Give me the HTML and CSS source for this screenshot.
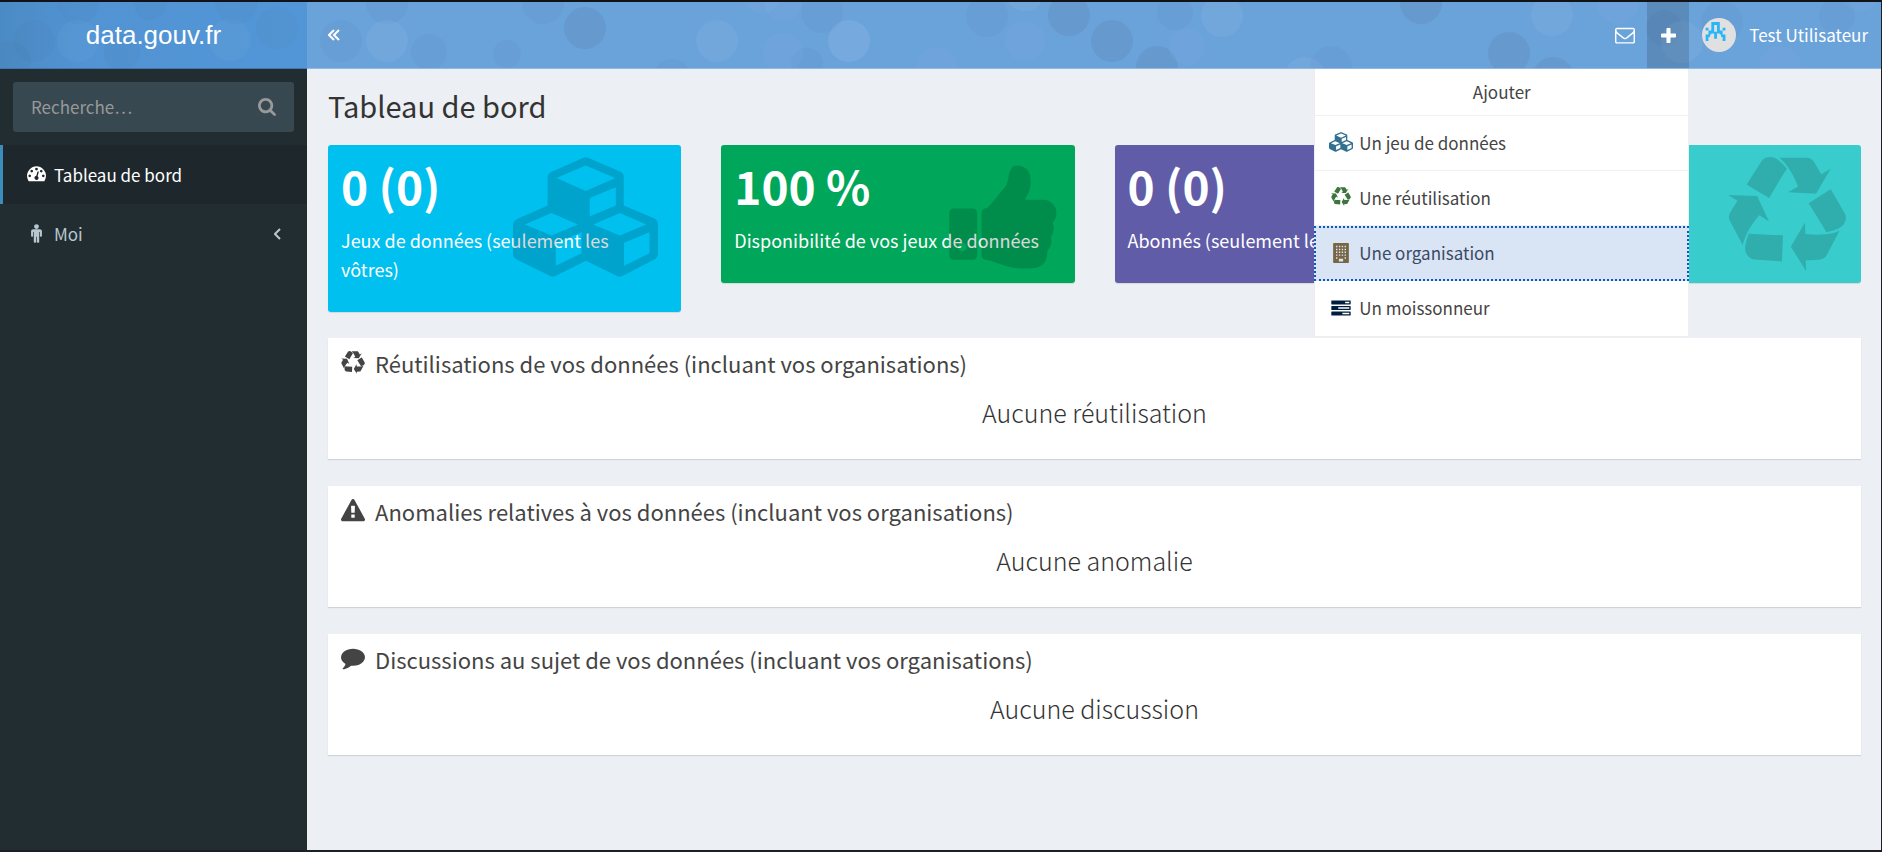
FILE: index.html
```html
<!DOCTYPE html>
<html lang="fr">
<head>
<meta charset="utf-8">
<title>Tableau de bord - data.gouv.fr</title>
<link rel="stylesheet" href="styles.css">
</head>
<body>
<svg class="sprite" aria-hidden="true">
  <symbol id="i-envelope" viewBox="0 0 1792 1792"><path d="M1664 1504v-768q-32 36-69 66-268 206-426 338-51 43-83 67t-86.500 48.500-102.500 24.500h-2q-48 0-102.500-24.500t-86.500-48.500-83-67q-158-132-426-338-37-30-69-66v768q0 13 9.500 22.500t22.500 9.500h1472q13 0 22.500-9.500t9.500-22.500zm0-1051v-24.500l-.5-13-3-12.500-5.500-9-9-7.500-14-2.500h-1472q-13 0-22.500 9.500t-9.500 22.500q0 168 147 284 193 152 401 317 6 5 35 29.500t46 37.500 44.500 31.500 50.500 27.500 43 9h2q20 0 43-9t50.500-27.500 44.500-31.500 46-37.500 35-29.500q208-165 401-317 54-43 100.500-115.500t46.500-131.500zm128-37v1088q0 66-47 113t-113 47h-1472q-66 0-113-47t-47-113v-1088q0-66 47-113t113-47h1472q66 0 113 47t47 113z"/></symbol>
  <symbol id="i-plus" viewBox="192 128 1408 1408"><path d="M1600 736v192q0 40-28 68t-68 28h-416v416q0 40-28 68t-68 28h-192q-40 0-68-28t-28-68v-416h-416q-40 0-68-28t-28-68v-192q0-40 28-68t68-28h416v-416q0-40 28-68t68-28h192q40 0 68 28t28 68v416h416q40 0 68 28t28 68z"/></symbol>
  <symbol id="i-search" viewBox="64 128 1664 1664"><path d="M1216 832q0-185-131.500-316.500t-316.500-131.500-316.500 131.500-131.500 316.500 131.500 316.500 316.500 131.500 316.500-131.500 131.500-316.500zm512 832q0 52-38 90t-90 38q-54 0-90-38l-343-342q-179 124-399 124-143 0-273.500-55.500t-225-150-150-225-55.500-273.500 55.500-273.500 150-225 225-150 273.500-55.500 273.500 55.500 225 150 150 225 55.500 273.500q0 220-124 399l343 343q37 37 37 90z"/></symbol>
  <symbol id="i-dashboard" viewBox="0 128 1792 1792"><path d="M384 1152q0-53-37.500-90.500t-90.500-37.500-90.500 37.500-37.500 90.500 37.500 90.500 90.500 37.500 90.500-37.500 37.500-90.500zm192-448q0-53-37.500-90.500t-90.500-37.500-90.500 37.500-37.500 90.500 37.500 90.500 90.500 37.500 90.500-37.500 37.500-90.500zm428 481l101-382q6-26-7.500-48.500t-38.500-29.500-48 6.500-30 39.500l-101 382q-60 5-107 43.500t-63 98.500q-20 77 20 146t117 89 146-20 89-117q16-60-6-117t-72-91zm660-33q0-53-37.500-90.500t-90.500-37.500-90.500 37.500-37.500 90.500 37.500 90.500 90.500 37.500 90.500-37.500 37.500-90.500zm-640-640q0-53-37.500-90.500t-90.500-37.500-90.500 37.500-37.500 90.500 37.500 90.500 90.500 37.500 90.500-37.500 37.500-90.500zm448 192q0-53-37.500-90.500t-90.500-37.500-90.500 37.500-37.500 90.500 37.500 90.500 90.500 37.500 90.500-37.500 37.500-90.500zm320 448q0 261-141 483-19 29-54 29h-1402q-35 0-54-29-141-221-141-483 0-182 71-348t191-286 286-191 348-71 348 71 286 191 191 286 71 348z"/></symbol>
  <symbol id="i-male" viewBox="0 144 1792 1792"><path d="M1408 832v416q0 40-28 68t-68 28-68-28-28-68v-352h-64v912q0 46-33 79t-79 33-79-33-33-79v-464h-64v464q0 46-33 79t-79 33-79-33-33-79v-912h-64v352q0 40-28 68t-68 28-68-28-28-68v-416q0-80 56-136t136-56h640q80 0 136 56t56 136zm-288-448q0 93-65.500 158.500t-158.500 65.500-158.500-65.500-65.500-158.500 65.500-158.500 158.500-65.500 158.500 65.500 65.500 158.500z"/></symbol>
  <symbol id="i-cubes" viewBox="576 228 440 364"><path fill-rule="evenodd" d="M790 230q7-3 14 0l99 43q9 5 9 16v86l92 39q12 6 12 18v88q0 13-11 19l-97 50q-8 4-16 0l-95-46-92 46q-8 4-16 0l-102-50q-11-6-11-19v-84q0-13 11-19l94-42v-84q0-12 9-17zM797 254l89 38-89 39-89-39zM809 352l79-32v55l-79 33zM693 398l80 35-80 33-81-33zM706 488l78-32v64l-78 38zM900 398l80 35-80 33-80-33zM913 488l77-32v64l-77 38z"/></symbol>
  <symbol id="i-recycle" viewBox="0 0 1792 1792"><path d="M836 1169l-15 368-2 22-420-29q-36-3-67-31.500t-47-65.500q-11-27-14.500-55t4-65 12-55 21.500-64 19-53q78 12 509 28zm-387-586l180 379-147-92q-63 72-111.500 144.500t-72.500 125-39.500 94.500-18.500 63l-4 21-190-357q-17-26-18-56t6-47l8-18q35-63 114-188l-140-86zm1231 517l-188 359q-12 29-36.500 46.500t-43.500 20.500l-18 4q-71 7-219 12l8 164-230-367 211-362 7 173q170 16 283 5t170-33zm-785-924q-47 63-265 435l-317-187-19-12 225-356q20-31 60-45t80-10q24 2 48.500 12t42 21 41.500 33 36 34.500 36 39.500 32 35zm655 307l212 363q18 37 12.500 76t-27.500 74q-13 20-33 37t-38 28-48.500 22-47 16-51.500 14-46 12q-34-72-265-436l313-195zm-143-226l142-83-220 373-419-20 151-86q-34-89-75-166t-75.500-123.500-64.500-80-47-46.500l-17-13 405 1q31-3 58 10.500t39 28.500l11 15q39 61 112 190z"/></symbol>
  <symbol id="i-thumb" viewBox="0 0 1792 1792"><path d="M320 1344q0-26-19-45t-45-19q-27 0-45.500 19t-18.500 45q0 27 18.500 45.500t45.500 18.500q26 0 45-18.500t19-45.500zm160-512v640q0 26-19 45t-45 19h-288q-26 0-45-19t-19-45v-640q0-26 19-45t45-19h288q26 0 45 19t19 45zm1184 0q0 86-55 149 15 44 15 76 3 76-43 137 17 56 0 117-15 57-54 94 9 112-49 181-64 76-197 78h-129q-66 0-144-15.500t-121.500-29-120.500-39.500q-123-43-158-44-26-1-45-19.500t-19-44.500v-641q0-25 18-43.500t43-20.500q24-2 76-59t101-121q68-87 101-120 18-18 31-48t17.500-48.500 13.500-60.500q7-39 12.500-61t19.500-52 34-50q19-19 45-19 46 0 82.500 10.500t60 26 40 40.500 24 45 12 50 5 45 .5 39q0 38-9.500 76t-19 60-27.500 56q-3 6-10 18t-11 22-8 24h277q78 0 135 57t57 135z"/></symbol>
  <symbol id="i-warning" viewBox="0 0 1792 1792"><path d="M1024 1375v-190q0-14-9.500-23.500t-22.500-9.500h-192q-13 0-22.500 9.500t-9.500 23.500v190q0 14 9.500 23.500t22.500 9.500h192q13 0 22.500-9.500t9.500-23.500zm-2-374l18-459q0-12-10-19-13-11-24-11h-220q-11 0-24 11-10 7-10 21l17 457q0 10 10 16.500t24 6.500h185q14 0 23.500-6.500t10.500-16.500zm-14-934l768 1408q35 63-2 126-17 29-46.500 46t-63.500 17h-1536q-34 0-63.500-17t-46.500-46q-37-63-2-126l768-1408q17-31 47-49t65-18 65 18 47 49z"/></symbol>
  <symbol id="i-comment" viewBox="0 128 1792 1792"><path d="M1792 896q0 174-120 321.500t-326 233-450 85.500q-70 0-145-8-198 175-460 242-49 14-114 22-17 2-30.500-9t-17.500-29v-1q-3-4-.5-12t2-10 4.500-9.500l6-9 7-8.500 8-9q7-8 31-34.500t34.500-38 31-39.500 32.500-51 27-59 26-76q-157-89-247.500-220t-90.500-281q0-130 71-248.500t191-204.500 286-136.500 348-50.500 348 50.500 286 136.500 191 204.500 71 248.500z"/></symbol>
  <symbol id="i-tasks" viewBox="0 0 1792 1664"><path d="M1024 1408h640v-128h-640v128zm-384-512h1024v-128h-1024v128zm640-512h384v-128h-384v128zm512 832v256q0 26-19 45t-45 19h-1664q-26 0-45-19t-19-45v-256q0-26 19-45t45-19h1664q26 0 45 19t19 45zm0-512v256q0 26-19 45t-45 19h-1664q-26 0-45-19t-19-45v-256q0-26 19-45t45-19h1664q26 0 45 19t19 45zm0-512v256q0 26-19 45t-45 19h-1664q-26 0-45-19t-19-45v-256q0-26 19-45t45-19h1664q26 0 45 19t19 45z"/></symbol>
  <symbol id="i-building" viewBox="0 0 22 28"><path fill-rule="evenodd" d="M1 0h20q1 0 1 1v26q0 1-1 1H1q-1 0-1-1V1q0-1 1-1zM4 4v2h2V4zM8 4v2h2V4zM12 4v2h2V4zM16 4v2h2V4zM4 8v2h2V8zM8 8v2h2V8zM12 8v2h2V8zM16 8v2h2V8zM4 12v2h2v-2zM8 12v2h2v-2zM12 12v2h2v-2zM16 12v2h2v-2zM4 16v2h2v-2zM8 16v2h2v-2zM12 16v2h2v-2zM16 16v2h2v-2zM4 20v2h2v-2zM16 20v2h2v-2zM8 22v4h6v-4z"/></symbol>
</svg>

<div class="page">
  <header class="header">
    <a class="logo" href="#">
      <svg class="bubbles" aria-hidden="true">
        <g class="dark"><circle cx="277" cy="26" r="21"/><circle cx="78" cy="1" r="21"/><circle cx="236" cy="1" r="21"/><circle cx="34" cy="39" r="21"/><circle cx="10" cy="60" r="21"/><circle cx="122" cy="50" r="18"/><circle cx="150" cy="2" r="16"/></g>
        <g class="light"><circle cx="78" cy="39" r="21"/><circle cx="230" cy="38" r="21"/></g>
      </svg>
      <span class="logo-text">data.gouv.fr</span>
    </a>
    <nav class="navbar">
      <svg class="bubbles" aria-hidden="true">
        <g class="dark"><circle class="strong" cx="278" cy="26" r="21"/><circle cx="80" cy="1" r="21"/><circle cx="236" cy="1" r="21"/><circle cx="34" cy="39" r="21"/><circle cx="122" cy="50" r="18"/><circle cx="200" cy="52" r="14"/><circle cx="365" cy="77" r="20"/><circle cx="515" cy="10" r="21"/><circle cx="500" cy="62" r="16"/><circle class="strong" cx="762" cy="13" r="21"/><circle class="strong" cx="805" cy="39" r="21"/><circle class="strong" cx="850" cy="65" r="21"/><circle cx="868" cy="10" r="18"/><circle cx="680" cy="14" r="21"/><circle cx="1024" cy="65" r="21"/><circle class="strong" cx="1114" cy="1" r="21"/><circle class="strong" cx="1202" cy="51" r="21"/><circle class="strong" cx="1246" cy="76" r="21"/><circle cx="1357" cy="26" r="18"/><circle cx="1415" cy="20" r="21"/><circle cx="1530" cy="14" r="18"/></g>
        <g class="light"><circle class="strong" cx="80" cy="39" r="21"/><circle class="strong" cx="410" cy="39" r="21"/><circle class="strong" cx="542" cy="39" r="21"/><circle cx="542" cy="39" r="21"/><circle cx="476" cy="1" r="18"/><circle cx="476" cy="51" r="20"/><circle cx="455" cy="-7" r="18"/><circle cx="630" cy="65" r="20"/><circle class="strong" cx="718" cy="-11" r="20"/><circle cx="718" cy="39" r="20"/><circle class="strong" cx="915" cy="14" r="21"/><circle cx="880" cy="45" r="18"/><circle class="strong" cx="998" cy="76" r="21"/><circle class="strong" cx="1245" cy="13" r="21"/><circle cx="1311" cy="1" r="21"/><circle class="strong" cx="1375" cy="40" r="21"/><circle cx="1473" cy="65" r="21"/><circle cx="1553" cy="-12" r="21"/></g>
      </svg>
      <button class="toggle" type="button" aria-label="Réduire le menu">
        <svg width="12" height="12" viewBox="0 0 12 12" aria-hidden="true"><path d="M6 1L1 6l5 5M11 1L6 6l5 5"/></svg>
      </button>
      <div class="nav-right">
        <button class="nav-button" type="button" aria-label="Messages"><svg class="icon nav-icon" aria-hidden="true"><use href="#i-envelope"/></svg></button>
        <div class="add">
          <button class="nav-button nav-button-open" type="button" aria-label="Ajouter" aria-expanded="true"><svg class="icon plus-icon" aria-hidden="true"><use href="#i-plus"/></svg></button>
          <div class="dropdown">
            <div class="dropdown-title">Ajouter</div>
            <a class="dropdown-item" href="#"><svg class="icon menu-icon cubes-small" aria-hidden="true"><use href="#i-cubes"/></svg>Un jeu de données</a>
            <a class="dropdown-item" href="#"><svg class="icon menu-icon recycle-small" aria-hidden="true"><use href="#i-recycle"/></svg>Une réutilisation</a>
            <a class="dropdown-item dropdown-item-focus" href="#"><svg class="icon menu-icon building-small" aria-hidden="true"><use href="#i-building"/></svg>Une organisation</a>
            <a class="dropdown-item" href="#"><svg class="icon menu-icon tasks-small" aria-hidden="true"><use href="#i-tasks"/></svg>Un moissonneur</a>
          </div>
        </div>
        <a class="user" href="#">
          <svg class="avatar" viewBox="0 0 84 84" aria-hidden="true"><circle cx="42" cy="42" r="42" fill="#e0e0e0"/><path fill="#29b6f6" d="M23 10h21v7H23zM23 17h7v21h-7zM37 17h7v21h-7zM9 24h7v7H9zM51 24h7v7h-7zM16 31h7v10h-7zM44 31h7v10h-7zM30 34h7v17h-7zM9 41h7v16H9zM51 41h7v16h-7zM16 41h4v6h-4zM47 41h4v6h-4z"/></svg>
          <span>Test Utilisateur</span>
        </a>
      </div>
    </nav>
  </header>

  <div class="body">
    <aside class="sidebar">
      <form class="search">
        <input class="search-input" type="text" placeholder="Recherche…" aria-label="Recherche">
        <button class="search-button" type="button" aria-label="Rechercher"><svg class="icon search-icon" aria-hidden="true"><use href="#i-search"/></svg></button>
      </form>
      <nav class="menu">
        <a class="menu-item menu-item-active" href="#"><svg class="icon side-icon" aria-hidden="true"><use href="#i-dashboard"/></svg><span>Tableau de bord</span></a>
        <a class="menu-item" href="#"><svg class="icon side-icon" aria-hidden="true"><use href="#i-male"/></svg><span>Moi</span><svg class="chevron" width="7" height="12" viewBox="0 0 7 12" aria-hidden="true"><path d="M6 1L1 6l5 5"/></svg></a>
      </nav>
    </aside>

    <main class="content">
      <h1 class="title">Tableau de bord</h1>
      <div class="cards">
        <a class="card card-aqua" href="#"><strong class="card-value">0 (0)</strong><span class="card-label">Jeux de données (seulement les vôtres)</span><svg class="icon card-icon card-icon-cubes" aria-hidden="true"><use href="#i-cubes"/></svg></a>
        <a class="card card-green" href="#"><strong class="card-value">100 %</strong><span class="card-label">Disponibilité de vos jeux de données</span><svg class="icon card-icon card-icon-thumb" aria-hidden="true"><use href="#i-thumb"/></svg></a>
        <a class="card card-purple" href="#"><strong class="card-value">0 (0)</strong><span class="card-label">Abonnés (seulement les</span></a>
        <a class="card card-teal" href="#" aria-label="Réutilisations"><svg class="icon card-icon card-icon-recycle" aria-hidden="true"><use href="#i-recycle"/></svg></a>
      </div>

      <section class="box">
        <h2 class="box-title"><svg class="icon box-icon" aria-hidden="true"><use href="#i-recycle"/></svg>Réutilisations de vos données (incluant vos organisations)</h2>
        <p class="box-empty">Aucune réutilisation</p>
      </section>
      <section class="box">
        <h2 class="box-title"><svg class="icon box-icon" aria-hidden="true"><use href="#i-warning"/></svg>Anomalies relatives à vos données (incluant vos organisations)</h2>
        <p class="box-empty">Aucune anomalie</p>
      </section>
      <section class="box">
        <h2 class="box-title"><svg class="icon box-icon" aria-hidden="true"><use href="#i-comment"/></svg>Discussions au sujet de vos données (incluant vos organisations)</h2>
        <p class="box-empty">Aucune discussion</p>
      </section>
    </main>
  </div>
</div>
</body>
</html>
```
FILE: styles.css
```css
* { box-sizing: border-box; }

body {
  margin: 0;
  font-family: "Noto Sans CJK SC", "Noto Sans", sans-serif;
  font-size: 17px;
  line-height: 29px;
  color: #333;
}

a { color: inherit; text-decoration: none; }

button {
  border: 0;
  padding: 0;
  background: none;
  color: inherit;
  font: inherit;
  cursor: pointer;
}

.sprite { position: absolute; width: 0; height: 0; }
.icon { display: block; flex: none; fill: currentColor; }

.page {
  display: flex;
  flex-direction: column;
  min-height: 100vh;
  border: solid #1d1f24;
  border-width: 2px 1px 2px 0;
  border-top-color: #111318;
}

/* Header */
.header {
  display: grid;
  grid-template-columns: 307px 1fr;
  height: 67px;
  color: #fff;
}

.logo, .navbar { position: relative; display: flex; align-items: center; }

.logo {
  justify-content: center;
  background: linear-gradient(90deg, #4b8bc4, #5193d3 25%, #5396d7);
  border-bottom: 1px solid #3f78b2;
}

.logo-text {
  position: relative;
  font-family: "Liberation Sans", Arial, sans-serif;
  font-size: 26px;
}

.navbar {
  justify-content: space-between;
  background: #6aa2da;
  border-bottom: 1px solid #8db9e4;
}

.bubbles { position: absolute; top: 0; left: 0; width: 100%; height: 100%; }
.dark { fill: rgba(70, 100, 130, 0.06); }
.dark .strong { fill: rgba(70, 100, 130, 0.12); }
.light { fill: rgba(255, 255, 255, 0.03); }
.light .strong { fill: rgba(255, 255, 255, 0.06); }

.toggle { position: relative; padding: 0 21px; }
.toggle svg { display: block; fill: none; stroke: #fff; stroke-width: 2; }

.nav-right { position: relative; display: flex; align-self: stretch; }

.nav-button {
  display: flex;
  align-items: center;
  justify-content: center;
  width: 44px;
  height: 100%;
}

.nav-button-open { width: 42px; background: rgba(0, 0, 0, 0.14); }
.nav-icon { width: 20px; height: 20px; }
.plus-icon { width: 15px; height: 15px; }
.add { position: relative; }

.user {
  display: flex;
  align-items: center;
  gap: 13px;
  padding: 0 13px;
}

.user span { padding-bottom: 2px; }
.avatar { display: block; width: 34px; height: 34px; }

.dropdown {
  position: absolute;
  z-index: 2;
  top: 100%;
  right: 0;
  width: 375px;
  margin-top: 1px;
  border: 1px solid #eee;
  border-top: 0;
  background: #fff;
  color: #444;
}

.dropdown-title { padding: 8px 0 9px; text-align: center; border-bottom: 1px solid #f1f1f1; }

.dropdown-item {
  display: flex;
  align-items: center;
  height: 55px;
  padding: 0 14px 2px;
  border-bottom: 1px solid #f1f1f1;
}

.dropdown-item:last-child { border-bottom: 0; }

.dropdown-item-focus {
  margin: 0 -1px;
  padding: 0 15px 2px;
  border: 0;
  outline: 2px dotted #0d57c0;
  outline-offset: -2px;
  background: #d9e4f5;
  color: #3b4a63;
}

.menu-icon { width: 24px; height: 20px; margin-right: 6px; }
.cubes-small { color: #31708f; }
.recycle-small { color: #3c763d; }
.building-small { color: #776544; }
.tasks-small { color: #001f3f; height: 18px; }

/* Sidebar */
.body { display: grid; grid-template-columns: 307px 1fr; flex: 1; }
.sidebar { background: #222d32; color: #b8c7ce; }

.search {
  display: flex;
  height: 50px;
  margin: 13px;
  border-radius: 3px;
  background: #374850;
}

.search-input {
  flex: 1;
  min-width: 0;
  padding: 0 18px 2px;
  border: 0;
  background: none;
  color: #fff;
  font: inherit;
}

.search-input::placeholder { color: #999; opacity: 1; }
.search-button { padding: 0 18px; color: #999; }
.search-icon { width: 18px; height: 18px; }

.menu-item {
  display: flex;
  align-items: center;
  gap: 8px;
  height: 59px;
  padding: 0 26px 0 24px;
  border-left: 3px solid transparent;
}

.menu-item-active { border-left-color: #3c8dbc; background: #1e282c; color: #fff; }
.side-icon { width: 19px; height: 19px; }
.chevron { display: block; margin-left: auto; fill: none; stroke: currentColor; stroke-width: 2; }

/* Content */
.content { padding: 16px 20px 20px 21px; background: #ecf0f5; }
.title { margin: 0 0 20px; font-size: 29px; line-height: 40px; font-weight: 400; }

.cards {
  display: grid;
  grid-template-columns: repeat(4, 1fr);
  align-items: start;
  gap: 40px;
  margin-bottom: 26px;
}

.card {
  position: relative;
  display: flex;
  flex-direction: column;
  min-height: 138px;
  padding: 17px 62px 28px 13px;
  border-radius: 3px;
  box-shadow: 0 1px 1px rgba(0, 0, 0, 0.1);
  color: #fff;
}

.card-aqua { background: #00c0ef; }
.card-green { background: #00a65a; }
.card-purple { background: #605ca8; }
.card-teal { background: #39cccc; }

.card-value { margin-bottom: 17px; font-size: 46px; line-height: 47px; }
.card-label { font-size: 18px; }
.card-green, .card-purple { padding-right: 0; }

.card-icon { position: absolute; top: 12px; width: 120px; height: 120px; color: rgba(0, 0, 0, 0.15); }
.card-icon-cubes { right: 22px; width: 147px; }
.card-icon-thumb { right: 10px; }
.card-icon-recycle { right: 14px; }

.box {
  height: 121px;
  margin-bottom: 27px;
  padding: 10px 13px;
  background: #fff;
  box-shadow: 0 1px 1px rgba(0, 0, 0, 0.12);
}

.box-title {
  display: flex;
  align-items: center;
  gap: 10px;
  margin: 0 0 17px;
  font-size: 22px;
  line-height: 30px;
  font-weight: 400;
  color: #444;
}

.box-icon { width: 24px; height: 24px; }
.box-empty { margin: 0; font-size: 25px; line-height: 34px; font-weight: 300; text-align: center; }
```
